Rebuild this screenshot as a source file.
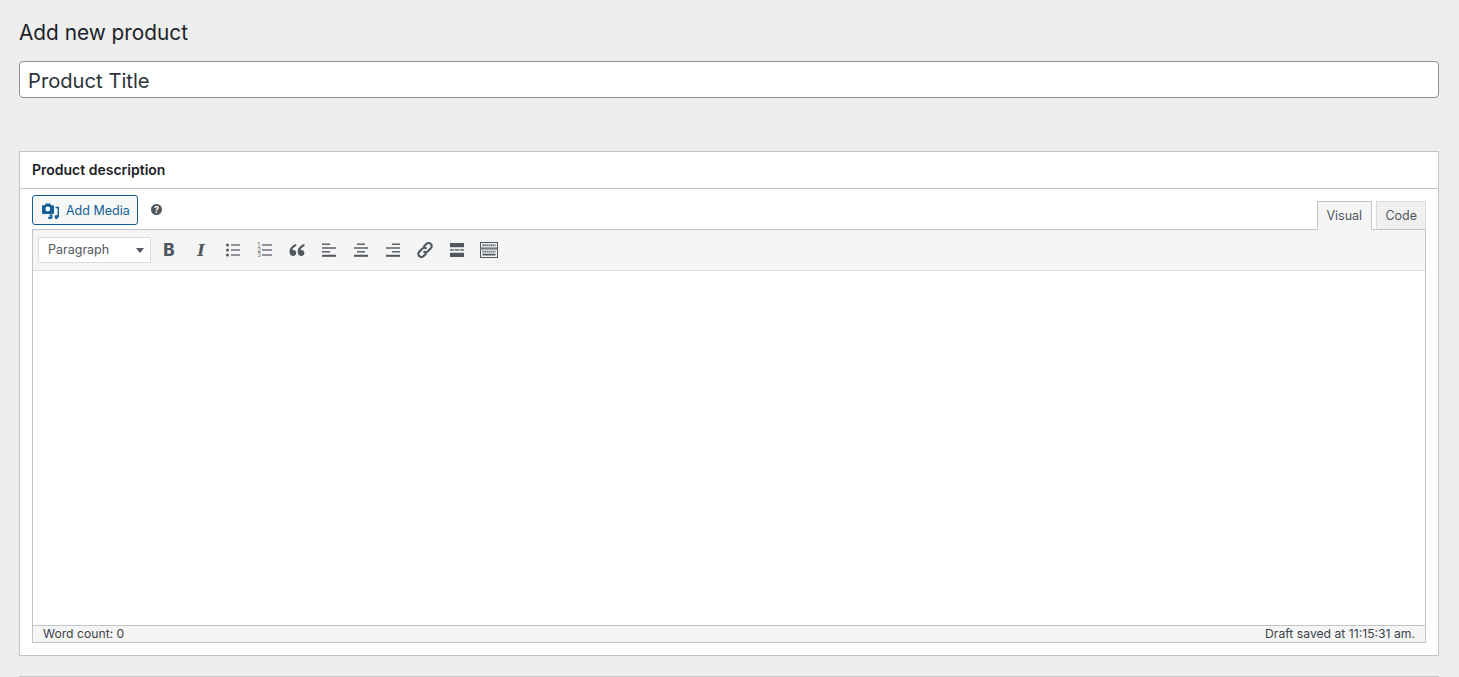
<template>
  <main class="page">
    <h1 class="title">Add new product</h1>
    <input class="title-input" type="text" value="Product Title" />
    <section class="card">
      <h2 class="card-head">Product description</h2>
      <div class="card-body">
        <div class="editor-top">
          <button class="media-btn" type="button">
            <svg width="18" height="18" viewBox="0 0 18 18" class="media-icon">
              <path fill="#135e96" d="M1 5.500c0-.8.5-1.300 1.200-1.300h1.600l1-1.700h4.400l1 1.700h1.600c.7 0 1.200.5 1.200 1.300v6.300c0 .7-.5 1.200-1.200 1.200H2.200c-.7 0-1.200-.5-1.200-1.200z" />
              <circle cx="6.800" cy="8" r="2.400" fill="#fff" />
              <path fill="none" stroke="#135e96" stroke-width="1.600" d="M14.500 6.500h2.900v9.500" />
              <circle cx="15.500" cy="16" r="1.900" fill="#135e96" />
              <path fill="none" stroke="#135e96" stroke-width="1.500" d="M8.500 14.300h2.200v3" />
              <circle cx="8.900" cy="17" r="1.700" fill="#135e96" />
            </svg>
            <span>Add Media</span>
          </button>
          <span class="help">?</span>
          <div class="tabs">
            <span class="tab tab-active">Visual</span>
            <span class="tab">Code</span>
          </div>
        </div>
        <div class="editor">
          <div class="toolbar">
            <div class="select">
              <span>Paragraph</span>
              <i class="caret"></i>
            </div>
            <div class="tools">
              <span class="tool glyph-b">B</span>
              <span class="tool glyph-i">I</span>
              <span class="tool">
                <svg width="16" height="16" viewBox="0 0 16 16" fill="#50575e">
                  <circle cx="2.500" cy="3" r="1.500" /><circle cx="2.500" cy="8" r="1.500" /><circle cx="2.500" cy="13" r="1.500" />
                  <rect x="6" y="2.400" width="9" height="1.200" /><rect x="6" y="7.400" width="9" height="1.200" /><rect x="6" y="12.400" width="9" height="1.200" />
                </svg>
              </span>
              <span class="tool">
                <svg width="16" height="16" viewBox="0 0 16 16" fill="#50575e">
                  <text x="0.500" y="5" class="num">1</text><text x="0.500" y="10" class="num">2</text><text x="0.500" y="15" class="num">3</text>
                  <rect x="5" y="2.400" width="10" height="1.200" /><rect x="5" y="7.400" width="10" height="1.200" /><rect x="5" y="12.400" width="10" height="1.200" />
                </svg>
              </span>
              <span class="tool">
                <svg width="16" height="16" viewBox="0 0 16 16" fill="#50575e">
                  <path d="M7 2C3.400 3.400.5 5.800.5 9.800.5 12.400 2 14 4 14c1.800 0 3.200-1.300 3.200-3.100S5.900 7.900 4.300 7.900c-.4 0-.7 0-1 .1.400-1.600 1.900-3.100 4.200-4.200z" />
                  <path d="M15.200 2c-3.600 1.400-6.500 3.800-6.500 7.800 0 2.600 1.500 4.200 3.500 4.200 1.800 0 3.200-1.300 3.200-3.100s-1.300-3-2.900-3c-.4 0-.7 0-1 .1.400-1.600 1.900-3.100 4.200-4.200z" />
                </svg>
              </span>
              <span class="tool">
                <svg width="16" height="16" viewBox="0 0 16 16" fill="#50575e">
                  <rect x="1" y="1.500" width="8" height="1.400" /><rect x="1" y="5.300" width="14" height="1.400" /><rect x="1" y="9.100" width="8" height="1.400" /><rect x="1" y="12.800" width="14" height="2" />
                </svg>
              </span>
              <span class="tool">
                <svg width="16" height="16" viewBox="0 0 16 16" fill="#50575e">
                  <rect x="4" y="1.500" width="8" height="1.400" /><rect x="1" y="5.300" width="14" height="1.400" /><rect x="4" y="9.100" width="8" height="1.400" /><rect x="1" y="12.800" width="14" height="2" />
                </svg>
              </span>
              <span class="tool">
                <svg width="16" height="16" viewBox="0 0 16 16" fill="#50575e">
                  <rect x="7" y="1.500" width="8" height="1.400" /><rect x="1" y="5.300" width="14" height="1.400" /><rect x="7" y="9.100" width="8" height="1.400" /><rect x="1" y="12.800" width="14" height="2" />
                </svg>
              </span>
              <span class="tool">
                <svg width="18" height="18" viewBox="0 0 18 18" fill="none" stroke="#50575e" stroke-width="2.100">
                  <path d="M7.600 5.800 10.300 3a3 3 0 0 1 4.500 0 3 3 0 0 1 0 4.300l-3 3a3 3 0 0 1-4.300 0" />
                  <path d="M10.400 12.200 7.700 15a3 3 0 0 1-4.500 0 3 3 0 0 1 0-4.300l3-3a3 3 0 0 1 4.300 0" />
                </svg>
              </span>
              <span class="tool">
                <svg width="16" height="16" viewBox="0 0 16 16" fill="#50575e">
                  <rect x="1" y="1" width="14" height="4.200" />
                  <rect x="1" y="7.300" width="4.300" height="1.300" /><rect x="6" y="7.300" width="4" height="1.300" /><rect x="10.700" y="7.300" width="4.300" height="1.300" />
                  <rect x="1" y="10.800" width="14" height="4.200" />
                </svg>
              </span>
              <span class="tool">
                <svg width="18" height="16" viewBox="0 0 18 16" fill="none" stroke="#50575e">
                  <rect x=".5" y=".5" width="17" height="5.500" />
                  <path d="M2.500 3.300h13" stroke-width="2" stroke-dasharray="1.300 .7" />
                  <rect x=".5" y="7" width="17" height="8.500" />
                  <path d="M2.500 9.600h13" stroke-width="1.600" stroke-dasharray="1.300 .7" />
                  <path d="M2.500 12.600h13" stroke-width="1.800" />
                </svg>
              </span>
            </div>
          </div>
          <div class="content"></div>
          <div class="status">
            <span>Word count: 0</span>
            <span>Draft saved at 11:15:31 am.</span>
          </div>
        </div>
      </div>
    </section>
    <div class="next-card"></div>
  </main>
</template>

<style scoped>
.page {
  box-sizing: border-box;
  height: 677px;
  overflow: hidden;
  padding: 0 20px 0 19px;
  font-family: Inter, "Liberation Sans", sans-serif;
  color: #1d2327;
}
.title {
  margin: 0;
  padding-top: 20px;
  height: 61px;
  box-sizing: border-box;
  font-size: 20.800px;
  line-height: 26px;
  font-weight: 400;
}
.title-input {
  display: block;
  box-sizing: border-box;
  width: 100%;
  height: 37px;
  padding: 1px 8px 0;
  border: 1px solid #8c8f94;
  border-radius: 4px;
  background: #fff;
  color: #2c3338;
  font-family: inherit;
  font-size: 20.200px;
  outline: none;
}
.card {
  box-sizing: border-box;
  margin-top: 53px;
  height: 505px;
  border: 1px solid #c3c4c7;
  background: #fff;
  display: flex;
  flex-direction: column;
}
.card-head {
  margin: 0;
  box-sizing: border-box;
  height: 37px;
  padding: 0 12px;
  border-bottom: 1px solid #c3c4c7;
  font-size: 14px;
  line-height: 36px;
  font-weight: 600;
}
.card-body {
  flex: 1;
  padding: 0 12px;
  display: flex;
  flex-direction: column;
}
.editor-top {
  height: 40px;
  display: flex;
  align-items: flex-start;
}
.media-btn {
  box-sizing: border-box;
  margin-top: 6px;
  width: 106px;
  height: 30px;
  padding: 0 0 0 8px;
  display: flex;
  align-items: center;
  gap: 7px;
  border: 1px solid #135e96;
  border-radius: 3px;
  background: #f6f7f7;
  color: #135e96;
  font-family: inherit;
  font-size: 12.500px;
}
.media-icon {
  flex: none;
  width: 18px;
  height: 18px;
}
.help {
  margin: 15px 0 0 13px;
  width: 11px;
  height: 11px;
  border-radius: 50%;
  background: #50575e;
  color: #fff;
  font-size: 9px;
  font-weight: 700;
  line-height: 11px;
  text-align: center;
}
.tabs {
  position: relative;
  z-index: 1;
  margin-left: auto;
  margin-top: 12px;
  display: flex;
  gap: 4px;
  height: 29px;
}
.tab {
  box-sizing: border-box;
  height: 29px;
  padding: 0 8px;
  border: 1px solid #dcdcde;
  border-bottom: 1px solid #c3c4c7;
  background: #f0f0f1;
  color: #50575e;
  font-size: 12.500px;
  line-height: 27px;
}
.tab-active {
  width: 55px;
  background: #f5f5f5;
  border-color: #c3c4c7;
  border-bottom-color: #f5f5f5;
}
.editor {
  flex: 1;
  box-sizing: border-box;
  margin-bottom: 12px;
  border: 1px solid #c3c4c7;
  display: flex;
  flex-direction: column;
}
.toolbar {
  box-sizing: border-box;
  height: 41px;
  flex: none;
  display: flex;
  align-items: center;
  padding-left: 5px;
  background: #f5f5f5;
  border-bottom: 1px solid #dcdcde;
}
.select {
  box-sizing: border-box;
  width: 113px;
  height: 26px;
  display: flex;
  align-items: center;
  justify-content: space-between;
  padding: 0 6px 2px 9px;
  background: #fff;
  border: 1px solid #dcdcde;
  color: #50575e;
  font-size: 12.500px;
}
.caret {
  width: 0;
  height: 0;
  border-left: 4px solid transparent;
  border-right: 4px solid transparent;
  border-top: 5px solid #50575e;
  margin-top: 3px;
}
.tools {
  display: flex;
  margin-left: 2px;
}
.tool {
  width: 32px;
  height: 26px;
  display: flex;
  align-items: center;
  justify-content: center;
  color: #50575e;
}
.glyph-b {
  font-size: 17px;
  font-weight: 800;
}
.glyph-i {
  font-family: "DejaVu Serif", "Liberation Serif", serif;
  font-size: 16px;
  font-weight: 700;
  font-style: italic;
}
.num {
  font-family: Inter, sans-serif;
  font-size: 5.500px;
}
.content {
  flex: 1;
  background: #fff;
}
.status {
  box-sizing: border-box;
  height: 17px;
  flex: none;
  display: flex;
  justify-content: space-between;
  padding: 0 10px;
  background: #f5f5f5;
  border-top: 1px solid #c3c4c7;
  color: #3c434a;
  font-size: 12.200px;
  line-height: 16px;
}
.next-card {
  margin-top: 20px;
  height: 10px;
  border-top: 1px solid #c3c4c7;
}
</style>

<style>
body {
  background: #eeeeee;
}
</style>
